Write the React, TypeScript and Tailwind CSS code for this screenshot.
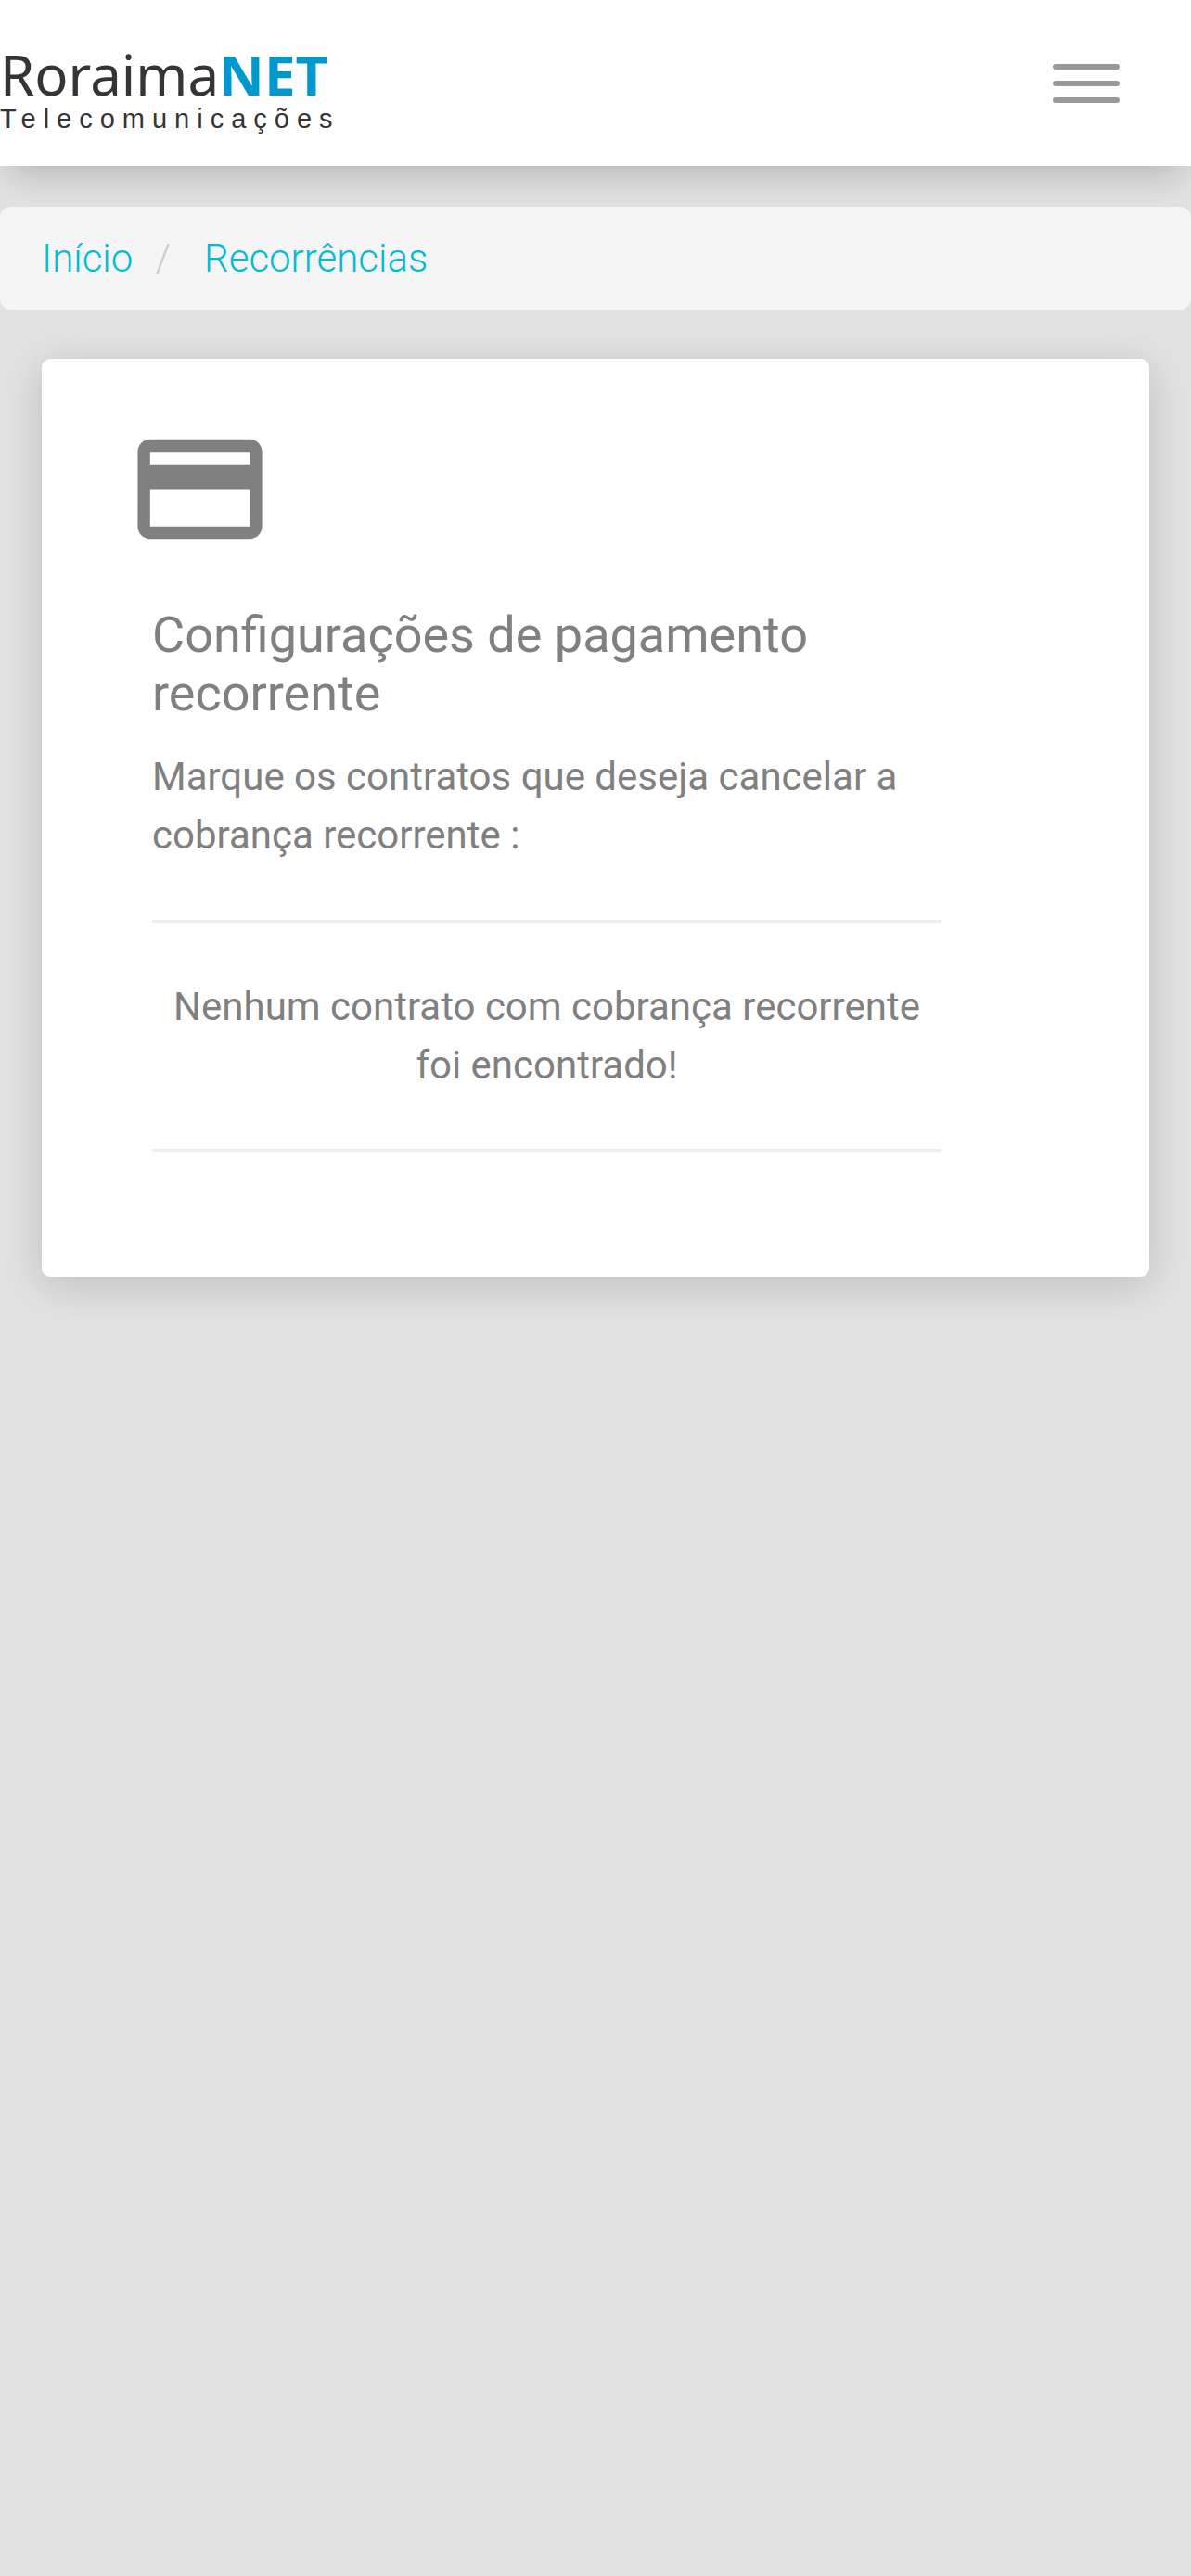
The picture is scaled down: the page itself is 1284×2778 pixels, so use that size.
import { useState } from "react";
import { MdPayment } from "react-icons/md";

const CRUMBS: { label: string; href: string }[] = [
  { label: "Início", href: "#inicio" },
  { label: "Recorrências", href: "#recorrencias" },
];

function Logo() {
  return (
    <a href="#inicio" className="flex flex-col whitespace-nowrap pt-4 text-[#373435]">
      <span className="font-['Noto_Sans',sans-serif] text-[60px] leading-[60px]">
        Roraima<span className="font-bold text-[#0099cf]">NET</span>
      </span>
      <span className="font-['Liberation_Sans',sans-serif] text-[29px] leading-9 tracking-[8px]">
        Telecomunicações
      </span>
    </a>
  );
}

function Navbar() {
  const [open, setOpen] = useState(false);

  return (
    <header className="relative flex h-[179px] items-center justify-between bg-white shadow-[0_12px_54px_0_rgba(0,0,0,0.08),0_21px_30px_-15px_rgba(0,0,0,0.15)]">
      <Logo />
      <button
        type="button"
        onClick={() => setOpen(!open)}
        aria-expanded={open}
        aria-label="Menu"
        className="mr-[77px] flex flex-col gap-3"
      >
        <span className="h-[6px] w-[72px] rounded-full bg-[#999]" />
        <span className="h-[6px] w-[72px] rounded-full bg-[#999]" />
        <span className="h-[6px] w-[72px] rounded-full bg-[#999]" />
      </button>
    </header>
  );
}

function Breadcrumb() {
  return (
    <nav aria-label="breadcrumb" className="relative mt-11 rounded-xl bg-[#f5f5f5] px-[45px] py-6">
      <ol className="flex font-light leading-[63px]">
        {CRUMBS.map((c, i) => (
          <li key={c.href} className="flex">
            {i > 0 && <span className="ml-6 mr-9 text-[#ccc]">/</span>}
            <a href={c.href} className="text-[#00bcd4]">
              {c.label}
            </a>
          </li>
        ))}
      </ol>
    </nav>
  );
}

export default function App() {
  return (
    <div className="min-h-screen bg-[#e2e2e2] font-[Roboto,sans-serif] text-[42px] text-[#808080]">
      <Navbar />
      <Breadcrumb />

      <main className="mx-[45px] mt-[53px] rounded-[9px] bg-white px-[90px] pb-[135px] pt-[60px] shadow-[0_9px_45px_0_rgba(0,0,0,0.16)]">
        <MdPayment className="size-[161px]" />

        <section className="ml-[29px] mr-[134px] mt-[45px]">
          <h1 className="text-[54px] leading-[63px]">Configurações de pagamento recorrente</h1>
          <p className="mt-[27px] leading-[63px]">
            Marque os contratos que deseja cancelar a cobrança recorrente :
          </p>
          <hr className="mt-[60px] border-t-[3px] border-[#eee]" />
          <p className="my-[59px] text-center leading-[63px]">
            Nenhum contrato com cobrança recorrente foi encontrado!
          </p>
          <hr className="border-t-[3px] border-[#eee]" />
        </section>
      </main>
    </div>
  );
}
